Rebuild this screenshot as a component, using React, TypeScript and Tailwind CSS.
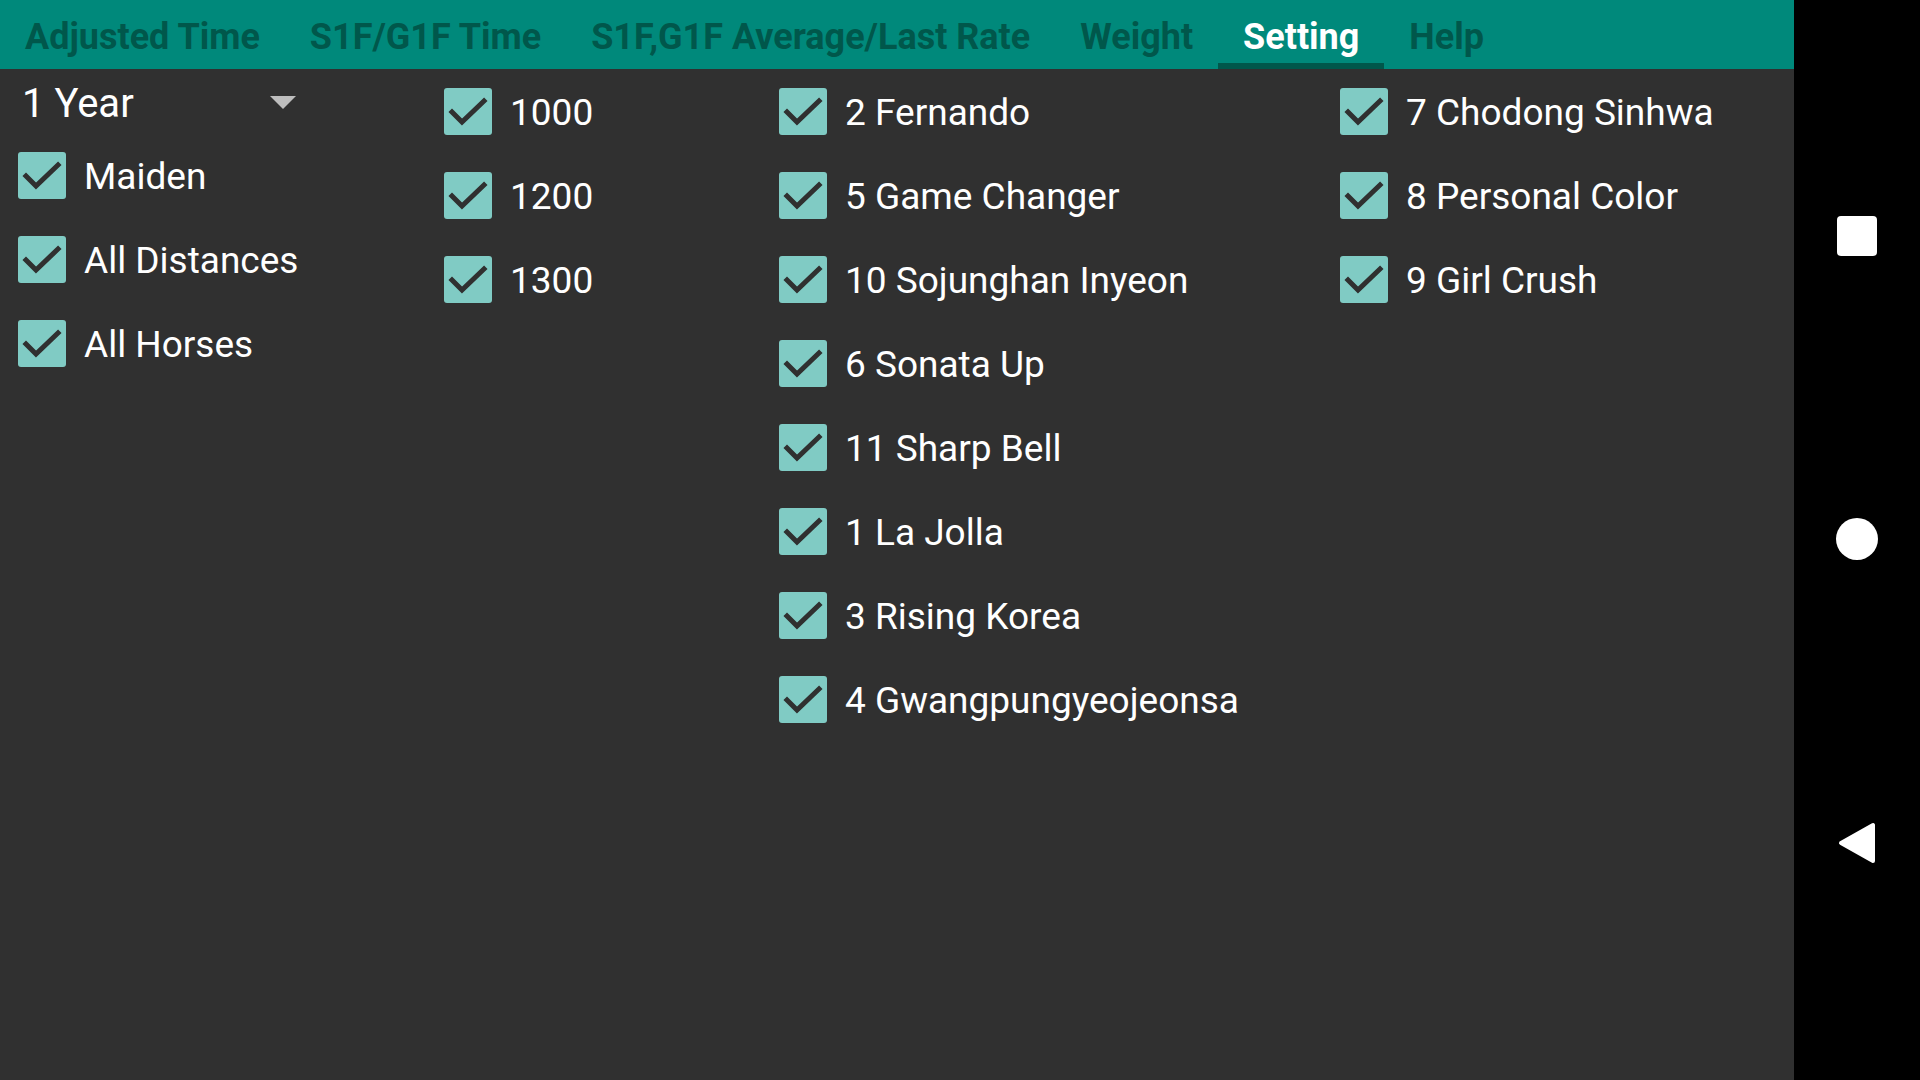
const tabs = [
  "Adjusted Time",
  "S1F/G1F Time",
  "S1F,G1F Average/Last Rate",
  "Weight",
  "Setting",
  "Help",
];

const distances = ["1000", "1200", "1300"];

const horsesA = [
  "2 Fernando",
  "5 Game Changer",
  "10 Sojunghan Inyeon",
  "6 Sonata Up",
  "11 Sharp Bell",
  "1 La Jolla",
  "3 Rising Korea",
  "4 Gwangpungyeojeonsa",
];

const horsesB = ["7 Chodong Sinhwa", "8 Personal Color", "9 Girl Crush"];

// one android style checkbox row
const CheckRow = ({ label }: { label: string }) => (
  <div className="flex h-[84px] items-center gap-[18px]">
    <div className="flex h-[47px] w-[48px] shrink-0 items-center justify-center rounded-[3px] bg-[#80cbc4]">
      <svg width="48" height="47" viewBox="0 0 48 47">
        <path
          d="M8 24 L18 34 L40 13"
          fill="none"
          stroke="#303030"
          strokeWidth="5"
          strokeLinecap="square"
        />
      </svg>
    </div>
    <span className="pt-[2px] whitespace-nowrap text-[37px] leading-none text-white">{label}</span>
  </div>
);

export default function App() {
  return (
    <div
      className="flex h-[1080px] w-[1920px] overflow-hidden bg-[#303030]"
      style={{ fontFamily: "Roboto, 'Noto Sans', sans-serif" }}
    >
      <div className="flex w-[1794px] flex-col">
        {/* tab strip */}
        <div className="flex h-[69px] bg-[#00897b]">
          {tabs.map((t) => (
            <div
              key={t}
              className={`relative flex items-center px-[25px] pt-[4px] text-[36px] font-bold whitespace-nowrap ${
                t === "Setting" ? "text-white" : "text-[#00574b]"
              }`}
            >
              {t}
              {t === "Setting" && (
                <span className="absolute bottom-0 left-0 h-[6px] w-full bg-[#00574b]" />
              )}
            </div>
          ))}
        </div>

        {/* settings body */}
        <div className="flex flex-1">
          <div className="flex w-[426px] flex-col pl-[18px]">
            <div className="flex h-[64px] w-[278px] items-center justify-between pl-[4px] pt-[6px]">
              <span className="text-[40px] leading-none text-white">1 Year</span>
              <svg width="26" height="14" viewBox="0 0 26 14" className="mb-[2px]">
                <path d="M0 0 L26 0 L13 13 Z" fill="#bdbdbd" />
              </svg>
            </div>
            <CheckRow label="Maiden" />
            <CheckRow label="All Distances" />
            <CheckRow label="All Horses" />
          </div>

          <div className="flex w-[335px] flex-col pl-[18px]">
            {distances.map((d) => (
              <CheckRow key={d} label={d} />
            ))}
          </div>

          <div className="flex w-[561px] flex-col pl-[18px]">
            {horsesA.map((h) => (
              <CheckRow key={h} label={h} />
            ))}
          </div>

          <div className="flex flex-1 flex-col pl-[18px]">
            {horsesB.map((h) => (
              <CheckRow key={h} label={h} />
            ))}
          </div>
        </div>
      </div>

      {/* system navigation bar */}
      <div className="flex w-[126px] flex-col items-center justify-center gap-[262px] bg-black">
        <div className="h-[40px] w-[40px] rounded-[4px] bg-white" />
        <div className="h-[42px] w-[42px] rounded-full bg-white" />
        <svg width="40" height="42" viewBox="0 0 40 42">
          <path
            d="M36 3 L36 39 L4 21 Z"
            fill="white"
            stroke="white"
            strokeWidth="4"
            strokeLinejoin="round"
          />
        </svg>
      </div>
    </div>
  );
}
